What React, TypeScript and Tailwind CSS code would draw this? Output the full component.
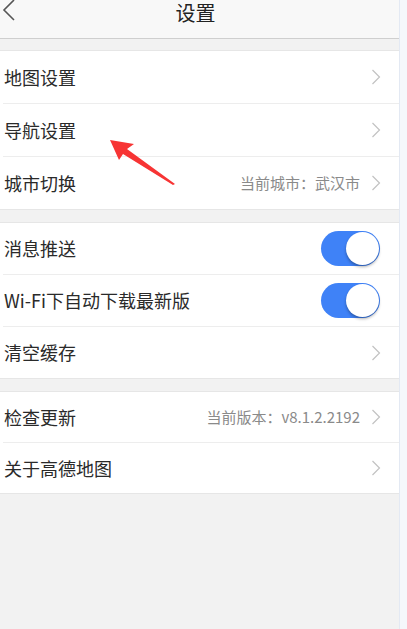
import React from "react";

function Chevron() {
  return (
    <svg width="10" height="16" viewBox="0 0 10 16" className="shrink-0">
      <path d="M1.5 1 L8.5 8 L1.5 15" fill="none" stroke="#c2c2c2" strokeWidth="1.2" />
    </svg>
  );
}

function Toggle() {
  return (
    <span className="relative block h-[35px] w-[59px] rounded-full bg-[#3f82f7]">
      <span className="absolute right-[1px] top-[1px] h-[33px] w-[33px] rounded-full bg-white shadow-[0_2px_3px_rgba(0,0,0,0.3)]" />
    </span>
  );
}

type Row = { label: string; value?: string; toggle?: boolean };

function Group({ rows, h }: { rows: Row[]; h: string }) {
  return (
    <div className="border-y border-[#e6e6e6] bg-white">
      {rows.map((row, i) => (
        <div key={row.label} className={i > 0 ? "ml-[3px] border-t border-[#ededed]" : "ml-[3px]"}>
          <div className={`${h} flex items-center pl-[1px] pr-[18px]`}>
            <span className="text-[18px] text-[#2a2a2a]">{row.label}</span>
            <div className="ml-auto flex items-center gap-[11px]">
              {row.value && <span className="text-[15px] text-[#8a8a8a]">{row.value}</span>}
              {row.toggle ? <span className="mr-[1px]"><Toggle /></span> : <Chevron />}
            </div>
          </div>
        </div>
      ))}
    </div>
  );
}

export default function App() {
  return (
    <div className="flex h-[629px] w-[407px] bg-[#f5f7fb]" style={{ fontFamily: '"Noto Sans CJK SC", "Noto Sans", sans-serif' }}>
      <div className="relative h-full w-[400px] border-r border-[#e3e9f3] bg-[#f2f2f2]">
        <div className="flex h-[39px] items-start border-b border-[#cfcfcf] bg-[#f8f8f8]">
          <svg width="14" height="22" viewBox="0 0 14 22" className="ml-[2px] shrink-0">
            <path d="M12 0 L2 10 L12 20" fill="none" stroke="#555" strokeWidth="1.6" />
          </svg>
          <div className="mt-[1px] flex-1 pr-[24px] text-center text-[20px] leading-[24px] text-[#222]">设置</div>
        </div>
        <div className="h-[11px]" />
        <Group
          h="h-[52px]"
          rows={[
            { label: "地图设置" },
            { label: "导航设置" },
            { label: "城市切换", value: "当前城市：武汉市" },
          ]}
        />
        <div className="h-[12px]" />
        <Group
          h="h-[51px]"
          rows={[
            { label: "消息推送", toggle: true },
            { label: "Wi-Fi下自动下载最新版", toggle: true },
            { label: "清空缓存" },
          ]}
        />
        <div className="h-[12px]" />
        <Group
          h="h-[50px]"
          rows={[
            { label: "检查更新", value: "当前版本：v8.1.2.2192" },
            { label: "关于高德地图" },
          ]}
        />
        <svg className="absolute left-[108px] top-[137px]" width="72" height="50" viewBox="0 0 72 50">
          <path d="M2 3 L26 7 L19 12 L67 47 L65 48 L15 17 L11 23 Z" fill="#f73434" />
        </svg>
      </div>
    </div>
  );
}
